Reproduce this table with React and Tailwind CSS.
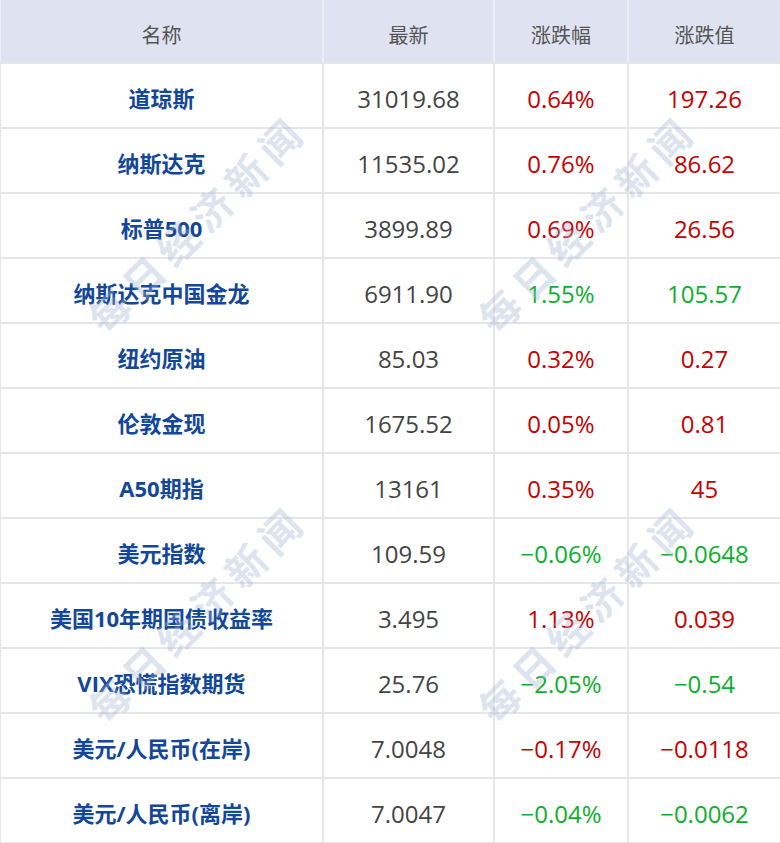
import React from "react";

const rows = [
  { name: "道琼斯", last: "31019.68", pct: "0.64%", chg: "197.26", up: true },
  { name: "纳斯达克", last: "11535.02", pct: "0.76%", chg: "86.62", up: true },
  { name: "标普500", last: "3899.89", pct: "0.69%", chg: "26.56", up: true },
  { name: "纳斯达克中国金龙", last: "6911.90", pct: "1.55%", chg: "105.57", up: false },
  { name: "纽约原油", last: "85.03", pct: "0.32%", chg: "0.27", up: true },
  { name: "伦敦金现", last: "1675.52", pct: "0.05%", chg: "0.81", up: true },
  { name: "A50期指", last: "13161", pct: "0.35%", chg: "45", up: true },
  { name: "美元指数", last: "109.59", pct: "−0.06%", chg: "−0.0648", up: false },
  { name: "美国10年期国债收益率", last: "3.495", pct: "1.13%", chg: "0.039", up: true },
  { name: "VIX恐慌指数期货", last: "25.76", pct: "−2.05%", chg: "−0.54", up: false },
  { name: "美元/人民币(在岸)", last: "7.0048", pct: "−0.17%", chg: "−0.0118", up: true },
  { name: "美元/人民币(离岸)", last: "7.0047", pct: "−0.04%", chg: "−0.0062", up: false },
];

const font = { fontFamily: '"Open Sans", "Noto Sans CJK SC", sans-serif' };

// diagonal "每日经济新闻" stamp repeated over the table
function Watermark() {
  return (
    <div className="rotate-[-45deg] whitespace-nowrap pl-[8px] text-[40px] font-bold tracking-[8px] text-[#a3b4d4] opacity-35">
      每日经济新闻
    </div>
  );
}

export default function App() {
  return (
    <div className="relative h-[843px] w-[780px] overflow-hidden bg-white" style={font}>
      <div className="grid grid-cols-[321px_169px_132px_1fr] gap-x-[2px] bg-[#eceef6] pl-[1px]">
        {["名称", "最新", "涨跌幅", "涨跌值"].map((h) => (
          <div
            key={h}
            className="flex h-[62px] items-center justify-center bg-[#dfe2f1] pt-[10px] text-[20px] text-[#555]"
          >
            {h}
          </div>
        ))}
      </div>
      <div className="grid grid-cols-[321px_169px_132px_1fr] gap-[2px] bg-[#e6e6e8] py-[2px] pl-[1px]">
        {rows.map((r) => {
          const color = r.up ? "text-[#c80000]" : "text-[#0cb02c]";
          return (
            <React.Fragment key={r.name}>
              <div className="flex h-[63px] items-center justify-center bg-white pt-[6px] text-[22px] font-bold text-[#12479a]">
                {r.name}
              </div>
              <div className="flex h-[63px] items-center justify-center bg-white pt-[6px] text-[24px] text-[#444]">
                {r.last}
              </div>
              <div className={`flex h-[63px] items-center justify-center bg-white pt-[6px] text-[24px] ${color}`}>
                {r.pct}
              </div>
              <div className={`flex h-[63px] items-center justify-center bg-white pt-[6px] text-[24px] ${color}`}>
                {r.chg}
              </div>
            </React.Fragment>
          );
        })}
      </div>
      <div className="pointer-events-none absolute inset-0 grid grid-cols-[390px_390px] grid-rows-[390px_390px] pt-[32px]">
        {[0, 1, 2, 3].map((i) => (
          <div key={i} className="flex items-center justify-center">
            <Watermark />
          </div>
        ))}
      </div>
    </div>
  );
}
